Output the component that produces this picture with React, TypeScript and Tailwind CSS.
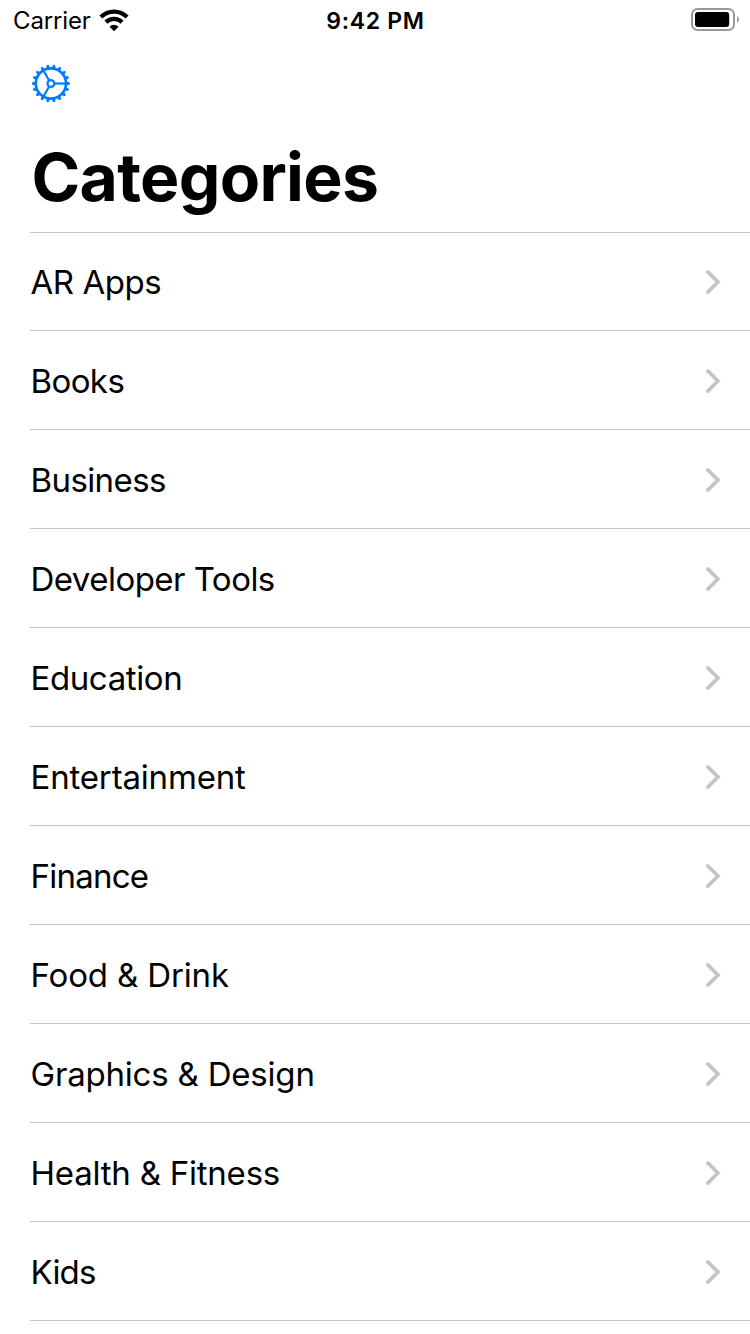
const categories = [
  { name: "AR Apps", tracking: "tracking-[-0.45px]" },
  { name: "Books", tracking: "tracking-[-0.6px]" },
  { name: "Business", tracking: "tracking-[-0.6px]" },
  { name: "Developer Tools", tracking: "tracking-[-0.53px]" },
  { name: "Education", tracking: "tracking-[-0.4px]" },
  { name: "Entertainment", tracking: "tracking-[-0.17px]" },
  { name: "Finance", tracking: "tracking-[-0.75px]" },
  { name: "Food & Drink", tracking: "tracking-[-0.14px]" },
  { name: "Graphics & Design", tracking: "tracking-[-0.2px]" },
  { name: "Health & Fitness", tracking: "tracking-[-0.22px]" },
  { name: "Kids", tracking: "tracking-[-0.8px]" },
];

function WifiIcon() {
  return (
    <svg className="overflow-visible" width="30" height="22" viewBox="0 0.6 30 22" fill="none" stroke="#000" strokeWidth="4.3">
      <path d="M1.9 7.6 A18.6 18.6 0 0 1 28.1 7.6" />
      <path d="M6.9 12.7 A11.8 11.8 0 0 1 23.1 12.7" />
      <path d="M15 21.9 L10.5 17.3 A6.2 6.2 0 0 1 19.5 17.3 Z" fill="#000" stroke="none" />
    </svg>
  );
}

function BatteryIcon() {
  return (
    <svg width="49" height="24" viewBox="0 0 49 24" fill="none">
      <rect x="1" y="1" width="42" height="21" rx="5.5" stroke="#999" strokeWidth="2" />
      <rect x="4" y="4" width="34.2" height="15" rx="3" fill="#000" />
      <path d="M46 8 Q48 9.3 48 11.5 Q48 13.7 46 15 Z" fill="#999" />
    </svg>
  );
}

const teeth = Array.from({ length: 18 }, (_, i) => i * 20);

function GearIcon() {
  return (
    <svg width="40" height="40" viewBox="-19.9 -19.5 40 40" fill="none" stroke="#007aff">
      <circle r="15.1" strokeWidth="2.6" />
      <circle r="3.4" strokeWidth="2.2" />
      {teeth.map((angle) => (
        <path key={angle} d="M15.5 -2 L18.9 -0.9 V0.9 L15.5 2 Z" fill="#007aff" stroke="none" transform={`rotate(${angle})`} />
      ))}
      {[0, 120, 240].map((angle) => (
        <path key={angle} d="M4 0 H15" strokeWidth="2.2" transform={`rotate(${angle})`} />
      ))}
    </svg>
  );
}

function Chevron() {
  return (
    <svg width="16" height="26" viewBox="0 0 16 26" fill="none" stroke="#c4c4c6" strokeWidth="3.6" strokeLinecap="round">
      <path d="M2.8 2.9 L13 13 L2.8 23.1" strokeLinejoin="miter" />
    </svg>
  );
}

export default function App() {
  return (
    <div className="flex h-[1334px] w-[750px] flex-col overflow-hidden bg-white font-['Inter',sans-serif] text-black">
      <header className="grid h-10 shrink-0 grid-cols-3 items-center">
        <div className="flex items-center gap-[8px] pt-[2px] pl-[13px]">
          <span className="text-[24px] leading-[38px] tracking-[-0.15px]">Carrier</span>
          <WifiIcon />
        </div>
        <span className="pt-[2px] pl-[1px] text-center text-[23px] leading-[38px] font-[560] tracking-[0.7px]">9:42 PM</span>
        <div className="flex justify-end pr-[10px]">
          <BatteryIcon />
        </div>
      </header>
      <div className="flex h-[87px] shrink-0 items-center pl-[31px]">
        <button aria-label="Settings">
          <GearIcon />
        </button>
      </div>
      <h1 className="h-[105px] shrink-0 pl-[31.5px] text-[66px] leading-[101px] font-bold tracking-[-0.7px]">Categories</h1>
      <ul className="ml-[30px] border-t border-[#c6c6c8]">
        {categories.map(({ name, tracking }) => (
          <li key={name} className="flex h-[99px] items-center justify-between border-b border-[#c6c6c8] pt-[2px] pr-[29px] pl-[0.5px] first:h-[98px] first:pt-0">
            <span className={`text-[33px] leading-[40px] ${tracking}`}>{name}</span>
            <Chevron />
          </li>
        ))}
      </ul>
    </div>
  );
}
